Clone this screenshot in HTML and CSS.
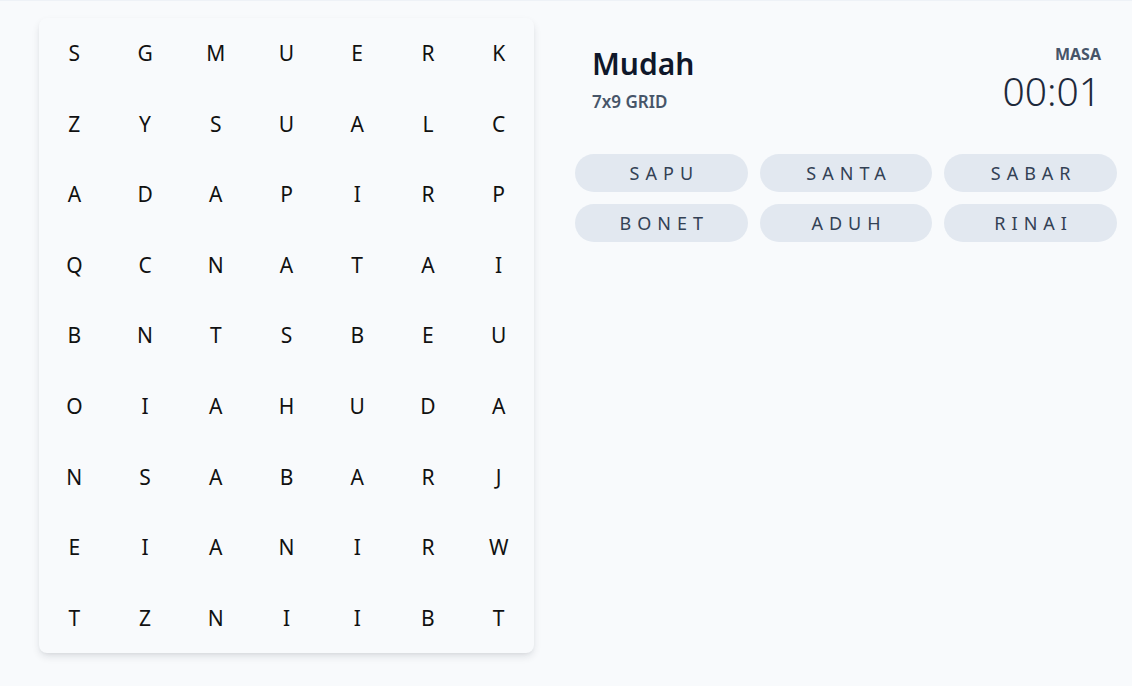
FILE: index.html
```html
<!DOCTYPE html>
<html lang="id">
<head>
<meta charset="utf-8">
<title>Mudah</title>
<link rel="stylesheet" href="styles.css">
</head>
<body>
<div class="page">
  <div class="board">
    <span>S</span><span>G</span><span>M</span><span>U</span><span>E</span><span>R</span><span>K</span>
    <span>Z</span><span>Y</span><span>S</span><span>U</span><span>A</span><span>L</span><span>C</span>
    <span>A</span><span>D</span><span>A</span><span>P</span><span>I</span><span>R</span><span>P</span>
    <span>Q</span><span>C</span><span>N</span><span>A</span><span>T</span><span>A</span><span>I</span>
    <span>B</span><span>N</span><span>T</span><span>S</span><span>B</span><span>E</span><span>U</span>
    <span>O</span><span>I</span><span>A</span><span>H</span><span>U</span><span>D</span><span>A</span>
    <span>N</span><span>S</span><span>A</span><span>B</span><span>A</span><span>R</span><span>J</span>
    <span>E</span><span>I</span><span>A</span><span>N</span><span>I</span><span>R</span><span>W</span>
    <span>T</span><span>Z</span><span>N</span><span>I</span><span>I</span><span>B</span><span>T</span>
  </div>
  <div class="side">
    <div class="header">
      <div class="title">
        <h1>Mudah</h1>
        <div class="sub">7x9 GRID</div>
      </div>
      <div class="timer">
        <div class="label">MASA</div>
        <div class="time">00:01</div>
      </div>
    </div>
    <div class="words">
      <div class="chip">SAPU</div>
      <div class="chip">SANTA</div>
      <div class="chip">SABAR</div>
      <div class="chip">BONET</div>
      <div class="chip">ADUH</div>
      <div class="chip">RINAI</div>
    </div>
  </div>
</div>
</body>
</html>
```

FILE: styles.css
```css
* { box-sizing: border-box; margin: 0; padding: 0; }
html, body { height: 100%; }
body {
  background: #f8fafc;
  border-top: 1px solid #eef2f7;
  font-family: "Noto Sans", "Open Sans", sans-serif;
  color: #0f172a;
}
.page {
  display: flex;
  align-items: flex-start;
  gap: 41px;
  padding: 17px 15px 0 39px;
}
.board {
  width: 495px;
  height: 635px;
  flex: none;
  display: grid;
  grid-template-columns: repeat(7, 1fr);
  grid-template-rows: repeat(9, 1fr);
  background: #f8fafc;
  border-radius: 8px;
  box-shadow: 0 4px 8px -1px rgba(15, 23, 42, 0.12), 0 2px 4px -2px rgba(15, 23, 42, 0.08);
}
.board span {
  display: flex;
  align-items: center;
  justify-content: center;
  font-size: 21px;
  color: #111111;
}
.side {
  flex: 1;
  min-width: 0;
}
.header {
  display: flex;
  justify-content: space-between;
  align-items: flex-start;
  padding: 26px 16px 0 17px;
}
.title h1 {
  font-size: 30px;
  font-weight: 600;
  line-height: 40px;
  color: #0f172a;
}
.sub {
  font-size: 17px;
  font-weight: 600;
  color: #475569;
  line-height: 22px;
  margin-top: 7px;
}
.timer {
  text-align: right;
}
.label {
  font-size: 16px;
  font-weight: 700;
  color: #475569;
  line-height: 20px;
  margin-top: 0;
}
.time {
  font-size: 39px;
  font-weight: 300;
  color: #1e293b;
  line-height: 38px;
  margin-top: 8px;
}
.words {
  display: grid;
  grid-template-columns: repeat(3, 1fr);
  gap: 12px 12px;
  margin-top: 41px;
}
.chip {
  height: 38px;
  border-radius: 999px;
  background: #e2e8f0;
  color: #334155;
  font-size: 18px;
  letter-spacing: 6px;
  padding-left: 6px;
  display: flex;
  align-items: center;
  justify-content: center;
}
```
